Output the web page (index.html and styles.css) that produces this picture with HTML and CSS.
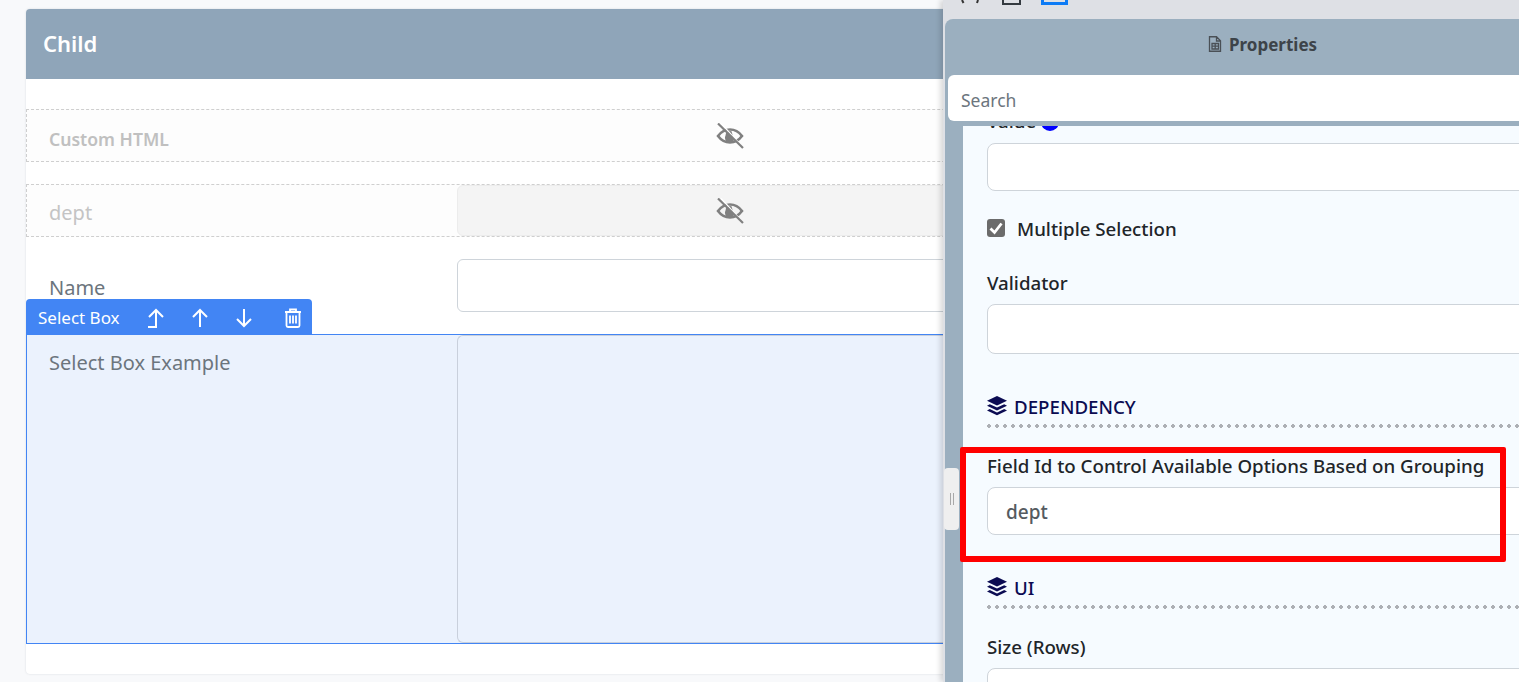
FILE: index.html
```html
<!DOCTYPE html>
<html lang="en">
<head>
<meta charset="utf-8">
<title>Form designer</title>
<link rel="stylesheet" href="styles.css">
</head>
<body>
<main class="canvas">
  <section class="card">
    <header class="card-head">Child</header>
    <div class="card-body">
      <div class="row row-hidden row-html">
        <span class="html-label">Custom HTML</span>
        <svg class="eye eye-html" viewBox="0 0 28 26"><use href="#eye-off"/></svg>
      </div>
      <div class="row row-hidden row-dept">
        <span class="cell-label muted">dept</span>
        <div class="cell-field cell-disabled"><svg class="eye" viewBox="0 0 28 26"><use href="#eye-off"/></svg></div>
      </div>
      <div class="row row-name">
        <span class="cell-label name-label">Name</span>
        <div class="cell-field input-box"></div>
      </div>
      <div class="row row-select">
        <div class="toolbar">
          <span class="toolbar-title">Select Box</span>
          <svg class="tool" viewBox="0 0 22 22"><path d="M3 20h8V3M4 10 11 3l7 7"/></svg>
          <svg class="tool" viewBox="0 0 22 22"><path d="M11 20V3M4 10 11 3l7 7"/></svg>
          <svg class="tool" viewBox="0 0 22 22"><path d="M11 2v17M4 12l7 7 7-7"/></svg>
          <svg class="tool tool-trash" viewBox="0 0 22 22"><path d="M3 5h16M8 5V2.500h6V5M4.500 5v13.500a1.500 1.500 0 0 0 1.500 1.500h10a1.500 1.500 0 0 0 1.500-1.500V5M8 8.500v8M11 8.500v8M14 8.500v8"/></svg>
        </div>
        <span class="cell-label select-label">Select Box Example</span>
        <div class="cell-field select-box"></div>
      </div>
    </div>
  </section>
</main>

<aside class="drawer">
  <div class="drawer-tools">
    <svg class="mini" viewBox="0 0 18 4"><path d="M1 0 2.500 3M16 3 17 0"/></svg>
    <span class="mini-box"></span>
    <span class="mini-active"></span>
  </div>
  <div class="panel">
    <div class="panel-head">
      <svg class="doc" viewBox="0 0 14 16"><path d="M1.500.75h7l4 4V15.250h-11zM8.500 1v4h4M4 7.500h6.500v5.500H4zM4 10.200h6.500M7.200 7.500v5.500"/></svg>
      <span>Properties</span>
    </div>
    <div class="search"><span>Search</span></div>
    <div class="panel-body">
      <div class="body-inner">
        <div class="label value-label">Value <span class="info-dot"></span></div>
        <div class="input value-input"></div>
        <div class="check-row">
          <span class="checkbox"><svg viewBox="0 0 18 18"><path d="M3.500 9.500 7.500 13.500 14.500 4.500"/></svg></span>
          <span class="check-label">Multiple Selection</span>
        </div>
        <div class="label validator-label">Validator</div>
        <div class="input validator-input"></div>
        <h3 class="section dep-section"><svg class="layers" viewBox="0 0 20 20"><use href="#layers"/></svg>DEPENDENCY</h3>
        <div class="label field-label">Field Id to Control Available Options Based on Grouping</div>
        <div class="input field-input">dept</div>
        <h3 class="section ui-section"><svg class="layers" viewBox="0 0 20 20"><use href="#layers"/></svg>UI</h3>
        <div class="label size-label">Size (Rows)</div>
        <div class="input size-input"></div>
      </div>
    </div>
  </div>
  <div class="handle"><span></span><span></span></div>
  <div class="highlight"></div>
</aside>

<svg class="defs" aria-hidden="true">
  <symbol id="eye-off" viewBox="0 0 28 26">
    <path class="eye-line" d="M2 13C5.500 8.300 9.500 6.500 14 6.500S22.500 8.300 26 13C22.500 17.700 18.500 19.500 14 19.500S5.500 17.700 2 13z"/>
    <path class="eye-pupil" d="M9.500 12.500a4.500 4.500 0 0 1 6-4.200l2.500 8.700a4.500 4.500 0 0 1-8.500-4.500z"/>
    <path class="eye-gap" d="M5 .5 27 24.500"/>
    <path class="eye-slash" d="M2 .5 27 25"/>
  </symbol>
  <symbol id="layers" viewBox="0 0 20 20">
    <path d="M10 0 20 4.800 10 9.600 0 4.800z"/>
    <path d="M2.800 8.200 10 11.600l7.200-3.400L20 9.700 10 14.500 0 9.700z"/>
    <path d="M2.800 13 10 16.400l7.200-3.400 2.800 1.500L10 19.300 0 14.500z"/>
  </symbol>
</svg>
</body>
</html>
```

FILE: styles.css
```css
* { box-sizing: border-box; }

html, body {
  margin: 0;
  height: 682px;
  overflow: hidden;
}

body {
  background: #f8f9fb;
  font-family: "Noto Sans", "Liberation Sans", sans-serif;
  color: #212529;
  position: relative;
}

.defs { width: 0; height: 0; display: block; }

.canvas { padding: 9px 0 0 26px; width: 1519px; }

/* Left card */
.card {
  width: 1480px;
  height: 665px;
  background: #fff;
  border-radius: 4px;
  box-shadow: 0 0 2px rgba(60, 70, 90, .18);
  overflow: visible;
}

.card-head {
  height: 70px;
  padding: 0 0 2px 17px;
  display: flex;
  align-items: center;
  background: #8fa5b9;
  color: #fff;
  font-size: 22px;
  font-weight: 600;
  border-radius: 4px 4px 0 0;
}

.card-body { padding-top: 30px; display: flex; flex-direction: column; gap: 22px; }

.row { display: flex; height: 53px; position: relative; }

.row-hidden { border: 1px dashed #cfcfcf; background: #fdfdfd; }

.row-html { align-items: center; padding: 7px 0 0 22px; }

.html-label { font-size: 17.600px; font-weight: 600; color: #c0c0c0; }

.eye { width: 28px; height: 26px; }

.eye-html { position: absolute; left: 689px; top: 13px; }

.eye-line { fill: none; stroke: #808080; stroke-width: 2.600; }
.eye-pupil { fill: #808080; }
.eye-gap { fill: none; stroke: #fff; stroke-width: 1.500; }
.eye-slash { fill: none; stroke: #808080; stroke-width: 2.200; }

.cell-label {
  width: 431px;
  padding-left: 23px;
  font-size: 20px;
  flex: none;
}

.row-hidden .cell-label { padding-left: 22px; line-height: 55px; }
.row-dept .cell-label { width: 430px; }

.muted { color: #c4c4c4; }

.cell-field { flex: 1; border-radius: 6px; }

.cell-disabled {
  background: #f4f4f4;
  border: 1px solid #ececec;
  display: flex;
  padding: 12px 0 0 258px;
}

.name-label { padding-top: 15px; color: #6c757d; }

.input-box { background: #fff; border: 1px solid #ced4da; }

.row-select {
  height: 310px;
  background: #ebf2fd;
  border: 1px solid #4285f4;
  border-right: 0;
}

.select-label { width: 430px; padding: 14px 0 0 22px; color: #6c757d; }

.select-box { border: 1px solid #c9d0dc; border-right: 0; }

.toolbar {
  position: absolute;
  left: -1px;
  top: -36px;
  width: 286px;
  height: 35px;
  background: #4285f4;
  border-radius: 4px 4px 0 0;
  display: flex;
  align-items: center;
  padding: 2px 0 0 12px;
  color: #fff;
  font-size: 17px;
}

.toolbar-title { width: 107px; flex: none; }

.tool {
  width: 22px;
  height: 22px;
  margin-right: 22px;
  fill: none;
  stroke: #fff;
  stroke-width: 2;
  flex: none;
}

.tool-trash { stroke-width: 1.800; margin-left: 5px; }

/* Right drawer */
.drawer {
  position: absolute;
  left: 943px;
  top: 0;
  width: 700px;
  height: 682px;
  background: #dee0e5;
  padding-left: 2px;
  box-shadow: -3px 0 5px rgba(0, 0, 0, .14);
}

.drawer-tools {
  height: 19px;
  display: flex;
  align-items: flex-start;
  position: relative;
  overflow: hidden;
}

.mini {
  position: absolute;
  left: 16px;
  top: 0;
  width: 18px;
  height: 4px;
  fill: none;
  stroke: #333;
  stroke-width: 2;
}

.mini-box {
  position: absolute;
  left: 57px;
  top: -6px;
  width: 19px;
  height: 11px;
  border: 2px solid #343a40;
}

.mini-active {
  position: absolute;
  left: 96px;
  top: -8px;
  width: 27px;
  height: 13px;
  border: 3px solid #0d7bf5;
}

.panel {
  height: 663px;
  background: #9bafbf;
  border-radius: 8px 0 0 0;
  display: flex;
  flex-direction: column;
}

.panel-head {
  height: 56px;
  flex: none;
  padding: 0 0 6px 263px;
  display: flex;
  align-items: center;
  gap: 7px;
  color: #3d4349;
  font-size: 17px;
  font-weight: 700;
}

.doc {
  width: 14px;
  height: 16px;
  fill: none;
  stroke: #4a5056;
  stroke-width: 1.300;
}

.search {
  height: 46px;
  flex: none;
  margin-left: 3px;
  padding: 4px 0 0 13px;
  display: flex;
  align-items: center;
  background: #fff;
  border-radius: 6px 0 0 6px;
  color: #6c757d;
  font-size: 17.500px;
}

.panel-body {
  flex: 1;
  margin: 5px 0 0 18px;
  background: #f6fbff;
  overflow: hidden;
  position: relative;
}

.body-inner { margin-top: -17px; padding-left: 24px; }

.label { font-size: 18.700px; font-weight: 500; line-height: 24px; color: #212529; }

.value-label { display: flex; align-items: center; gap: 5px; }

.info-dot {
  width: 18px;
  height: 18px;
  margin-top: 2px;
  border-radius: 50%;
  background: #0000ff;
}

.input {
  width: 640px;
  background: #fff;
  border: 1px solid #ced4da;
  border-radius: 8px;
}

.value-input { height: 48px; margin-top: 10px; }

.check-row { display: flex; align-items: center; gap: 12px; margin-top: 26px; height: 24px; }

.checkbox {
  width: 18px;
  height: 18px;
  margin-top: -3px;
  background: #6b6b6b;
  border-radius: 3px;
  display: flex;
}

.checkbox svg { fill: none; stroke: #fff; stroke-width: 2.800; }

.check-label { font-size: 18.700px; font-weight: 500; margin-top: -2px; }

.validator-label { margin-top: 30px; }

.validator-input { height: 50px; margin-top: 9px; }

.section {
  margin: 0;
  width: 640px;
  display: flex;
  align-items: center;
  gap: 7px;
  height: 26px;
  padding-bottom: 2px;
  color: #0b0b52;
  font-size: 18.700px;
  font-weight: 500;
  position: relative;
}

.section::after {
  content: "";
  position: absolute;
  left: 0;
  right: 0;
  bottom: -8px;
  height: 4px;
  background-image: radial-gradient(circle 2px at 2px 2px, #adb0b5 98%, transparent);
  background-size: 8px 4px;
}

.layers { width: 20px; height: 20px; fill: #0b0b52; flex: none; }

.dep-section { margin-top: 40px; }

.field-label { margin-top: 34px; }

.field-input {
  height: 48px;
  margin-top: 9px;
  padding: 2px 0 0 18px;
  display: flex;
  align-items: center;
  font-size: 19px;
  font-weight: 500;
  color: #555b61;
}

.ui-section { margin-top: 40px; }

.size-label { margin-top: 34px; }

.size-input { height: 48px; margin-top: 9px; }

.handle {
  position: absolute;
  left: 1px;
  top: 468px;
  width: 15px;
  height: 62px;
  background: #efefef;
  border-radius: 4px;
  display: flex;
  justify-content: center;
  align-items: center;
  gap: 2px;
}

.handle span { width: 1px; height: 12px; background: #a8a8a8; }

.highlight {
  position: absolute;
  left: 17px;
  top: 447px;
  width: 546px;
  height: 115px;
  border: 6px solid #ff0000;
  border-radius: 2px;
}
```
